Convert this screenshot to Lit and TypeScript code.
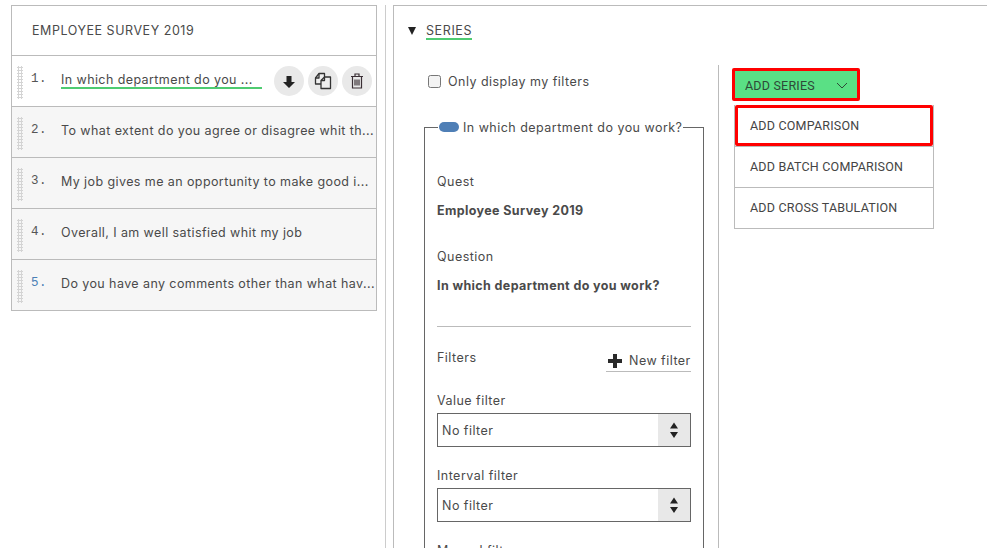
import { LitElement, html, css, svg } from "lit";
import { customElement } from "lit/decorators.js";

const questions = [
  "To what extent do you agree or disagree whit th...",
  "My job gives me an opportunity to make good i...",
  "Overall, I am well satisfied whit my job",
  "Do you have any comments other than what hav...",
];

const updown = svg`<svg width="10" height="18" viewBox="0 0 10 18"><path d="M5 1.500 9 7.500H1zM1 11h8L5 17z" fill="#222"/></svg>`;

@customElement("app-root")
export class AppRoot extends LitElement {
  static styles = css`
    :host { display: block; width: 987px; height: 548px; overflow: hidden; background: #fff; font-family: "Inter", sans-serif; font-size: 12.500px; font-weight: 400; color: #4a4a4a; letter-spacing: .47px; }
    * { box-sizing: border-box; }
    .page { display: flex; height: 548px; padding: 5px 0 0 11px; }
    .left { width: 366px; flex: none; align-self: flex-start; border: 1px solid #bbb; }
    .title { height: 49px; display: flex; align-items: center; padding-left: 20px; letter-spacing: .55px; }
    .row { height: 51px; border-top: 1px solid #bbb; background: #f6f6f6; display: flex; position: relative; padding: 16px 0 0 19px; white-space: nowrap; }
    .row.active { background: #fff; }
    .grip { position: absolute; left: 5px; top: 10px; width: 6px; height: 33px; background-image: radial-gradient(#d4d4d4 1px, transparent 1.100px); background-size: 3px 3px; }
    .num { width: 30px; flex: none; font-family: "Liberation Mono", monospace; font-size: 12.500px; letter-spacing: .5px; color: #555; }
    .num.blue { color: #4a7fb5; }
    .q { overflow: hidden; height: 17px; line-height: 15px; letter-spacing: .41px; }
    .active .q { width: 201px; border-bottom: 2px solid #4ecb71; flex: none; }
    .btns { display: flex; gap: 4px; margin-left: 12px; margin-top: -6px; }
    .btn { width: 30px; height: 30px; border-radius: 50%; background: #e9e9e9; display: flex; align-items: center; justify-content: center; }
    .divider { width: 1px; flex: none; background: #ccc; margin: 0 7px 0 8px; }
    .right { flex: 1; border-left: 1px solid #bbb; border-top: 1px solid #bbb; min-width: 0; }
    .series-head { display: flex; height: 59px; padding: 16px 0 0 14px; gap: 10px; }
    .tri { width: 0; height: 0; margin-top: 5px; border-left: 4px solid transparent; border-right: 4px solid transparent; border-top: 8px solid #222; }
    .series { height: 18px; border-bottom: 2px solid #4ecb71; line-height: 18px; letter-spacing: .6px; }
    .columns { display: flex; height: 600px; }
    .col1 { width: 324px; flex: none; padding: 0 0 0 30px; }
    .only { display: flex; align-items: center; gap: 7px; height: 33px; margin-left: 4px; }
    .check { width: 13px; height: 13px; border: 1px solid #777; border-radius: 2.500px; background: #f3f3f3; }
    fieldset { margin: 21px 0 0; width: 280px; padding: 0 12px; border: 1px solid #666; height: 500px; }
    legend { padding: 0 1px; margin-left: 1px; display: flex; align-items: center; gap: 4px; height: 16px; white-space: nowrap; }
    .pill { display: inline-block; width: 20px; height: 10px; border-radius: 5px; background: #4f7fb6; }
    .lbl { height: 16px; line-height: 16px; }
    .strong { font-weight: 700; margin-top: 13px; height: 16px; line-height: 16px; letter-spacing: .38px; }
    .quest { margin-top: 39px; }
    .question { margin-top: 30px; }
    hr { border: 0; border-top: 1px solid #bbb; margin: 32px 0 0; }
    .filters { display: flex; justify-content: space-between; margin-top: 23px; height: 22px; }
    .newf { display: flex; align-items: center; gap: 7px; width: 85px; height: 22px; padding-left: 2px; border-bottom: 1px solid #bbb; white-space: nowrap; }
    .flabel { margin-top: 21px; height: 16px; line-height: 16px; }
    .select { margin-top: 4px; height: 34px; border: 1px solid #666; display: flex; align-items: center; justify-content: space-between; padding-left: 4px; }
    .arrows { width: 32px; height: 32px; background: #e8e8e8; display: flex; align-items: center; justify-content: center; }
    .col2 { flex: 1; border-left: 1px solid #bbb; padding: 3px 0 0 13px; font-family: "Roboto", sans-serif; letter-spacing: .2px; font-size: 12.500px; }
    .add { width: 128px; height: 33px; background: #5ae085; border: 3px solid #f00; border-radius: 2px; display: flex; align-items: center; justify-content: space-between; padding: 2px 9px 0 10px; color: #2e4a38; }
    .menu { margin: 4px 0 0 2px; width: 200px; border: 1px solid #bbb; border-top: 0; background: #fff; color: #444; }
    .item { height: 41px; display: flex; align-items: center; padding: 0 0 1px 15px; border-top: 1px solid #bbb; }
    .item.first { border: 3px solid #f00; border-radius: 2px; padding: 0 0 0 12px; width: 198px; }
  `;

  render() {
    return html`<div class="page">
      <section class="left">
        <div class="title">EMPLOYEE SURVEY 2019</div>
        <div class="row active">
          <span class="grip"></span><span class="num">1.</span>
          <span class="q">In which department do you ...</span>
          <span class="btns">
            <span class="btn"><svg width="12" height="13" viewBox="0 0 12 13"><path d="M3.500 1h5v6H12L6 13 0 7h3.500z" fill="#222"/></svg></span>
            <span class="btn"><svg width="18" height="18" viewBox="0 0 18 18" fill="#eee" stroke="#333" stroke-width="1.300" stroke-linejoin="round"><path d="M1.500 6 5 1.500h5.500V12h-9z"/><path d="M5 1.500V6H1.500" fill="none"/><path d="M7 8.500 10.500 5h6v11.500H7z"/><path d="M10.500 5v3.500H7" fill="none"/></svg></span>
            <span class="btn"><svg width="14" height="16" viewBox="0 0 14 16" fill="none" stroke="#3a2f35" stroke-width="1.200"><path d="M1 3.500h12M5 3.500V1h4v2.500M2.500 3.500V15h9V3.500"/><path d="M5 6.500v6M7 6.500v6M9 6.500v6"/></svg></span>
          </span>
        </div>
        ${questions.map(
          (q, i) => html`<div class="row">
            <span class="grip"></span><span class="num ${i === 3 ? "blue" : ""}">${i + 2}.</span>
            <span class="q">${q}</span>
          </div>`
        )}
      </section>
      <div class="divider"></div>
      <section class="right">
        <div class="series-head"><span class="tri"></span><span class="series">SERIES</span></div>
        <div class="columns">
          <div class="col1">
            <label class="only"><span class="check"></span>Only display my filters</label>
            <fieldset>
              <legend><span class="pill"></span>In which department do you work?</legend>
              <div class="lbl quest">Quest</div>
              <div class="strong">Employee Survey 2019</div>
              <div class="lbl question">Question</div>
              <div class="strong">In which department do you work?</div>
              <hr />
              <div class="filters">
                <span>Filters</span>
                <span class="newf"><svg width="14" height="14" viewBox="0 0 14 14"><path d="M5 0h4v5h5v4H9v5H5V9H0V5h5z" fill="#2a2a2a"/></svg>New filter</span>
              </div>
              <div class="flabel">Value filter</div>
              <div class="select"><span>No filter</span><span class="arrows">${updown}</span></div>
              <div class="flabel">Interval filter</div>
              <div class="select"><span>No filter</span><span class="arrows">${updown}</span></div>
              <div class="flabel">Manual filter</div>
            </fieldset>
          </div>
          <div class="col2">
            <div class="add"><span>ADD SERIES</span><svg width="12" height="7" viewBox="0 0 12 7" fill="none" stroke="#2e4a38" stroke-width="1"><path d="M1 1l5 5 5-5"/></svg></div>
            <div class="menu">
              <div class="item first">ADD COMPARISON</div>
              <div class="item">ADD BATCH COMPARISON</div>
              <div class="item">ADD CROSS TABULATION</div>
            </div>
          </div>
        </div>
      </section>
    </div>`;
  }
}
